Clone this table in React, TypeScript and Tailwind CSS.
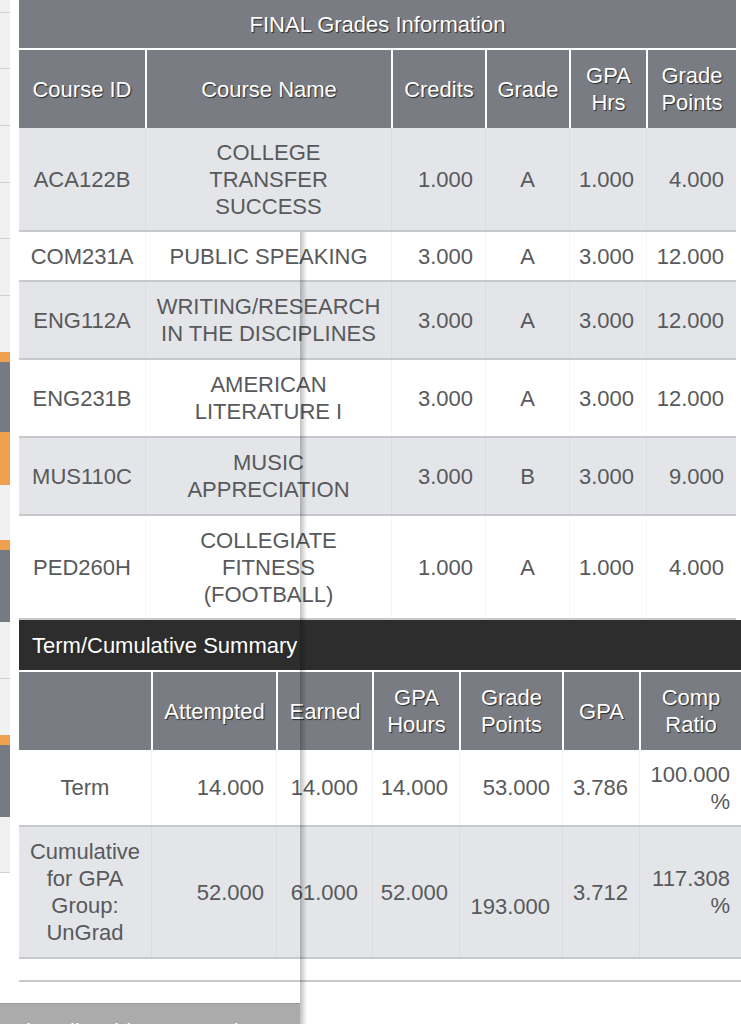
const courses = [
  { id: "ACA122B", name: ["COLLEGE", "TRANSFER", "SUCCESS"], credits: "1.000", grade: "A", hrs: "1.000", points: "4.000" },
  { id: "COM231A", name: ["PUBLIC SPEAKING"], credits: "3.000", grade: "A", hrs: "3.000", points: "12.000" },
  { id: "ENG112A", name: ["WRITING/RESEARCH", "IN THE DISCIPLINES"], credits: "3.000", grade: "A", hrs: "3.000", points: "12.000" },
  { id: "ENG231B", name: ["AMERICAN", "LITERATURE I"], credits: "3.000", grade: "A", hrs: "3.000", points: "12.000" },
  { id: "MUS110C", name: ["MUSIC", "APPRECIATION"], credits: "3.000", grade: "B", hrs: "3.000", points: "9.000" },
  { id: "PED260H", name: ["COLLEGIATE", "FITNESS", "(FOOTBALL)"], credits: "1.000", grade: "A", hrs: "1.000", points: "4.000" },
];

// background page peeking out on the left edge
const strip = [
  { h: 12, c: "bg-[#f1f1f1]" }, { h: 56, c: "bg-[#f1f1f1] border-t border-[#cfcfcf]" },
  { h: 57, c: "bg-[#f1f1f1] border-t border-[#cfcfcf]" }, { h: 57, c: "bg-[#f1f1f1] border-t border-[#cfcfcf]" },
  { h: 56, c: "bg-[#f1f1f1] border-t border-[#cfcfcf]" }, { h: 57, c: "bg-[#f1f1f1] border-t border-[#cfcfcf]" },
  { h: 57, c: "bg-[#f1f1f1] border-t border-[#cfcfcf]" },
  { h: 10, c: "bg-[#f0a04e]" }, { h: 70, c: "bg-[#767a82]" }, { h: 53, c: "bg-[#f0a04e]" },
  { h: 55, c: "bg-[#f1f1f1]" }, { h: 10, c: "bg-[#f0a04e]" }, { h: 72, c: "bg-[#767a82]" },
  { h: 57, c: "bg-[#f1f1f1] border-b border-[#cfcfcf]" }, { h: 56, c: "bg-[#f1f1f1]" },
  { h: 10, c: "bg-[#f0a04e]" }, { h: 72, c: "bg-[#767a82]" },
  { h: 56, c: "bg-[#f1f1f1] border-b border-[#cfcfcf]" },
];

const head = "text-white [text-shadow:1px_1px_1px_#2a2a2a]";
const cell = "flex items-center leading-[27px]";
const sep = "border-l border-black/[0.04]";

function HeadCell({ lines, first }: { lines: string[]; first?: boolean }) {
  return (
    <div className={`flex items-center justify-center text-center leading-[27px] bg-[#797c83] ${head} ${first ? "" : "border-l-2 border-white"}`}>
      <div>{lines.map((l) => <div key={l}>{l}</div>)}</div>
    </div>
  );
}

export default function App() {
  return (
    <div className="relative w-[741px] h-[1024px] overflow-hidden bg-white text-[22px] text-[#58595b] font-['Liberation_Sans',Arial,sans-serif]">
      <div className="flex">
        <div className="w-[10px] shrink-0 flex flex-col">
          {strip.map((s, i) => (
            <div key={i} className={s.c} style={{ height: s.h }} />
          ))}
        </div>

        <div className="ml-[9px]">
          {/* final grades */}
          <div className="w-[717px]">
            <div className={`h-[48px] flex items-center justify-center bg-[#797c83] ${head}`}>FINAL Grades Information</div>
            <div className="mt-[2px] h-[78px] grid grid-cols-[126px_246px_94px_84px_77px_90px]">
              <HeadCell lines={["Course ID"]} first />
              <HeadCell lines={["Course Name"]} />
              <HeadCell lines={["Credits"]} />
              <HeadCell lines={["Grade"]} />
              <HeadCell lines={["GPA", "Hrs"]} />
              <HeadCell lines={["Grade", "Points"]} />
            </div>
            {courses.map((c, i) => {
              const py = c.name.length === 2 ? "py-[11px]" : "py-[10.5px]";
              return (
                <div
                  key={c.id}
                  className={`grid grid-cols-[126px_246px_94px_84px_77px_90px] border-b-2 border-[#c6c8cb] ${i % 2 === 0 ? "bg-[#e3e5e9]" : "bg-white"}`}
                >
                  <div className={`${cell} ${py} justify-center`}>{c.id}</div>
                  <div className={`${cell} ${py} ${sep} justify-center text-center`}>
                    <div>{c.name.map((l) => <div key={l}>{l}</div>)}</div>
                  </div>
                  <div className={`${cell} ${py} ${sep} justify-end pr-[12px]`}>{c.credits}</div>
                  <div className={`${cell} ${py} ${sep} justify-center`}>{c.grade}</div>
                  <div className={`${cell} ${py} ${sep} justify-end pr-[12px]`}>{c.hrs}</div>
                  <div className={`${cell} ${py} ${sep} justify-end pr-[12px]`}>{c.points}</div>
                </div>
              );
            })}
          </div>

          {/* summary */}
          <div className="w-[722px]">
            <div className={`h-[50px] flex items-center pl-[13px] bg-[#2d2d2d] ${head}`}>Term/Cumulative Summary</div>
            <div className="mt-[2px] h-[78px] grid grid-cols-[132px_125px_96px_87px_103px_77px_102px]">
              <HeadCell lines={[]} first />
              <HeadCell lines={["Attempted"]} />
              <HeadCell lines={["Earned"]} />
              <HeadCell lines={["GPA", "Hours"]} />
              <HeadCell lines={["Grade", "Points"]} />
              <HeadCell lines={["GPA"]} />
              <HeadCell lines={["Comp", "Ratio"]} />
            </div>
            <div className="grid grid-cols-[132px_125px_96px_87px_103px_77px_102px] border-b-2 border-[#c6c8cb] bg-white">
              <div className={`${cell} py-[10.5px] justify-center`}>Term</div>
              <div className={`${cell} py-[10.5px] ${sep} justify-end pr-[12px]`}>14.000</div>
              <div className={`${cell} py-[10.5px] ${sep} justify-end pr-[14px]`}>14.000</div>
              <div className={`${cell} py-[10.5px] ${sep} justify-end pr-[11px]`}>14.000</div>
              <div className={`${cell} py-[10.5px] ${sep} justify-end pr-[12px]`}>53.000</div>
              <div className={`${cell} py-[10.5px] ${sep} justify-end pr-[11px]`}>3.786</div>
              <div className={`${cell} py-[10.5px] ${sep} justify-end pr-[11px] text-right`}>
                <div><div>100.000</div><div>%</div></div>
              </div>
            </div>
            <div className="grid grid-cols-[132px_125px_96px_87px_103px_77px_102px] border-b-2 border-[#c6c8cb] bg-[#e3e5e9]">
              <div className={`${cell} py-[11px] justify-center text-center`}>
                <div><div>Cumulative</div><div>for GPA</div><div>Group:</div><div>UnGrad</div></div>
              </div>
              <div className={`${cell} py-[11px] ${sep} justify-end pr-[12px]`}>52.000</div>
              <div className={`${cell} py-[11px] ${sep} justify-end pr-[14px]`}>61.000</div>
              <div className={`${cell} py-[11px] ${sep} justify-end pr-[11px]`}>52.000</div>
              <div className={`${cell} pb-[11px] ${sep} justify-end pr-[12px] pt-[39px]`}>193.000</div>
              <div className={`${cell} py-[11px] ${sep} justify-end pr-[11px]`}>3.712</div>
              <div className={`${cell} py-[11px] ${sep} justify-end pr-[11px] text-right`}>
                <div><div>117.308</div><div>%</div></div>
              </div>
            </div>
            <div className="h-[23px] border-b-2 border-[#c6c8cb] bg-white" />
          </div>
        </div>
      </div>

      {/* edge of the sliding panel above the page */}
      <div className="absolute left-[300px] top-[232px] bottom-0 w-[7px] bg-linear-to-r from-black/25 to-transparent pointer-events-none" />
      <div className="absolute left-0 bottom-0 w-[300px] h-[21px] overflow-hidden bg-[#ababab] border-t border-[#9a9a9a]">
        <div className="pt-[14px] pl-[4px] whitespace-nowrap text-white text-[22px] leading-[27px]">
          Ad&nbsp;&nbsp;&nbsp;&nbsp;All Holds&nbsp;&nbsp;&nbsp;&nbsp;&nbsp;&nbsp;&nbsp;&nbsp;&nbsp;&nbsp;&nbsp;&nbsp;&nbsp;&nbsp;&nbsp;k
        </div>
      </div>
    </div>
  );
}
